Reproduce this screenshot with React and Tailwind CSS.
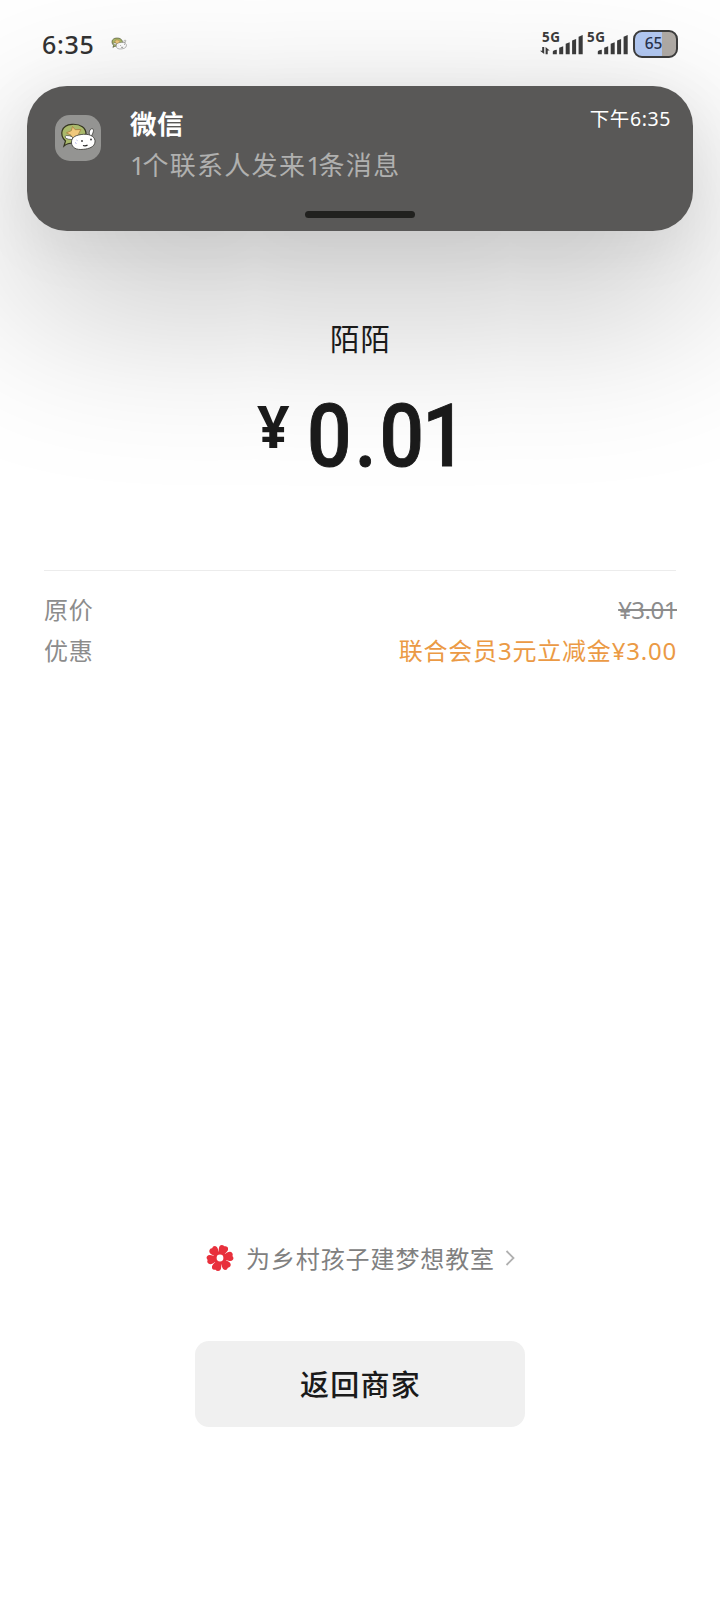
const FONT = "font-['Noto_Sans','Noto_Sans_CJK_SC',sans-serif]";

function Mascot({ className }) {
  return (
    <svg viewBox="0 0 46 46" className={className} aria-hidden="true">
      <path d="M9 31 l1.500-5 C4 20 6 10 17 9.300 C26 8.800 31 13 31 19 C31 26 24 28.500 18 28 C14 28 12 28.500 9 31Z" fill="#a9b96b" stroke="#33331f" strokeWidth="1.2" />
      <path d="M17.500 11.500 l2.700 3.200 5.600-.2 -2.100 4.300 1.600 4.200 -4.900-.4 -3.600 2.200 -.8-4.600 -4.600-2.400 4.900-2.100Z" fill="#f0c87c" stroke="#a98546" strokeWidth=".9" strokeLinejoin="round" />
      <ellipse cx="14" cy="22.500" rx="4" ry="1.800" fill="#fff" stroke="#33332f" strokeWidth=".6" transform="rotate(12 14 22.500)" />
      <path d="M34.500 20.500 C33.500 16 35.500 13.300 37.500 13.800 C39.500 14.600 38 18 36.500 21Z" fill="#fff" stroke="#33332f" strokeWidth=".8" />
      <path d="M16.500 28 C16 21.500 22 19.800 28.500 19.300 C36 18.800 40.500 22.500 40 27 C39.500 32 34 33.800 28.500 34.300 C21 35.300 17 32.500 16.500 28Z" fill="#fff" stroke="#33332f" strokeWidth=".8" />
      <circle cx="27" cy="26" r=".9" fill="#333" />
      <circle cx="36" cy="24.500" r=".9" fill="#333" />
      <path d="M28 30.500 q2.500 1 4.500-.4" fill="none" stroke="#222" strokeWidth="1.200" />
      <path d="M20 27.500 l1.500 1 M21.500 25 l1 .6" stroke="#8686d8" strokeWidth=".7" />
    </svg>
  );
}

function Signal({ data }) {
  return (
    <div className="relative h-[28px] w-[45px]">
      <svg viewBox="0 0 45 28" className="h-[28px] w-[45px]" fill="#3a3a3a" aria-hidden="true">
        {data && <path d="M4.200 17 v7 L0 20.800 h2.200 v-3.800Z M5.600 24.300 v-7.300 L9.700 20.500 h-2 V24.300Z" />}
        <path d="M12.800 24.300 v-2.600 q.2-1.500 4-1.900 V24.300Z" />
        <path d="M19.200 24.300 v-6.600 l4-1.400 V24.300Z" />
        <path d="M25.700 24.300 V13.700 l4-1.500 V24.300Z" />
        <path d="M32.100 24.300 V10.500 L36.100 9 V24.300Z" />
        <path d="M38.600 24.300 V6.800 L42.700 5 V24.300Z" />
      </svg>
      <span className="absolute -top-[3px] left-[2px] text-[13.500px] font-bold leading-[20px] tracking-[0.600px] text-[#3a3a3a]">5G</span>
    </div>
  );
}

function StatusBar() {
  return (
    <header className="flex h-[86px] items-center pl-[42px] pr-[42px] pt-px">
      <span className="text-[25px] font-medium leading-[30px] tracking-[0.700px] text-[#333]">6:35</span>
      <Mascot className="ml-[14px] size-[20px]" />
      <div className="ml-auto flex items-center">
        <Signal data />
        <Signal />
        <div className="ml-[3px] flex h-[28px] w-[45px] items-center justify-center rounded-[9px] border-2 border-[#3d3d3d] bg-linear-to-r from-[#b3c9f3] from-67% to-[#b0aba6] to-67%">
          <span className="mr-1 text-[15.500px] font-medium leading-none text-[#29334d]">65</span>
        </div>
      </div>
    </header>
  );
}

function Notification() {
  return (
    <section className="mx-[27px] flex h-[145px] flex-col rounded-[40px] bg-[#595857] shadow-[0_65px_175px_15px_rgba(0,0,0,0.22),0_12px_60px_rgba(0,0,0,0.08)]">
      <div className="flex pl-7 pr-[22px]">
        <div className="mt-[29px] size-[46px] rounded-[15px] bg-[#949492]">
          <Mascot className="size-[46px]" />
        </div>
        <div className="ml-[29px] mt-[18px]">
          <h1 className="text-[26.500px] font-bold leading-[40px] tracking-[0.500px] text-white">微信</h1>
          <p className="text-[26px] leading-[43px] tracking-[1.300px] text-[#b0b0af]">
            <span className="tracking-[-2.500px]">1</span>个联系人发来<span className="tracking-[-2.500px]">1</span>条消息
          </p>
        </div>
        <time className="ml-auto mt-[18px] text-[19.500px] leading-[30px] tracking-[0.600px] text-white">下午6:35</time>
      </div>
      <div className="mb-[13px] ml-[278px] mt-auto h-[7px] w-[110px] rounded-full bg-[#21211f]" />
    </section>
  );
}

function Flower() {
  return (
    <svg viewBox="0 0 28 28" className="size-[28px]" aria-hidden="true">
      <g fill="#e8303c">
        <circle cx="14" cy="14" r="6.500" />
        {[20, 80, 140, 200, 260, 320].map((a) => (
          <path key={a} transform={`rotate(${a} 14 14)`} d="M12 11 L9.800 6 Q8.600 2.200 11.400 1 Q13 .5 14.200 1.500 Q16.300 0 18 1.600 Q19.400 3.300 18.200 6 L16 11Z" />
        ))}
      </g>
      <circle cx="14" cy="14" r="3.400" fill="#fff" />
    </svg>
  );
}

export default function App() {
  return (
    <main className={`${FONT} flex h-[1600px] w-[720px] flex-col overflow-hidden bg-white`}>
      <StatusBar />
      <Notification />
      <div className="z-10 flex flex-1 flex-col">
        <h2 className="mt-[88px] pl-px text-center text-[29.500px] leading-[40px] tracking-[1px] text-[#1a1a1a]">陌陌</h2>
        <div className="mt-[31px] flex h-[90px] items-start pl-[257px] text-[#1a1a1a]">
          <span className="mt-[5px] w-[34px] origin-left scale-x-95 text-[60px] font-bold leading-[60px]">¥</span>
          <span className="ml-[16px] mt-[2px] origin-left scale-x-90 font-['Roboto',sans-serif] text-[87px] font-medium leading-[88px] [-webkit-text-stroke:1px_#1a1a1a]">
            <span className="tracking-[3.500px]">0.</span>
            <span className="tracking-[-2px]">0</span>1
          </span>
        </div>
        <dl className="mx-11 mt-[90px] border-t border-[#ececec] pt-[18px] text-[24px] leading-[41px] tracking-[0.800px] text-[#8c8c8c]">
          <div className="-mr-px flex justify-between">
            <dt>原价</dt>
            <dd className="tracking-[-0.500px] line-through decoration-[1.500px]">¥3.01</dd>
          </div>
          <div className="-mr-px flex justify-between">
            <dt>优惠</dt>
            <dd className="text-[#eb9a45]">联合会员3元立减金¥3.00</dd>
          </div>
        </dl>
        <div className="mb-[173px] mt-auto flex flex-col items-center">
          <a className="flex h-10 items-center pl-px text-[24px] leading-10 tracking-[0.900px] text-[#808080]">
            <Flower />
            <span className="ml-[12px] pt-px">为乡村孩子建梦想教室</span>
            <svg viewBox="0 0 10 16" className="ml-[10px] h-4 w-[10px]" fill="none" stroke="#b0b0b0" strokeWidth="1.800" aria-hidden="true">
              <path d="M1.500 1 L8.500 8 L1.500 15" />
            </svg>
          </a>
          <button className="mt-[63px] h-[86px] w-[330px] rounded-[14px] bg-[#f0f0f0] pl-px pt-px text-[29px] font-medium leading-[40px] tracking-[1.200px] text-[#1a1a1a]">返回商家</button>
        </div>
      </div>
    </main>
  );
}
